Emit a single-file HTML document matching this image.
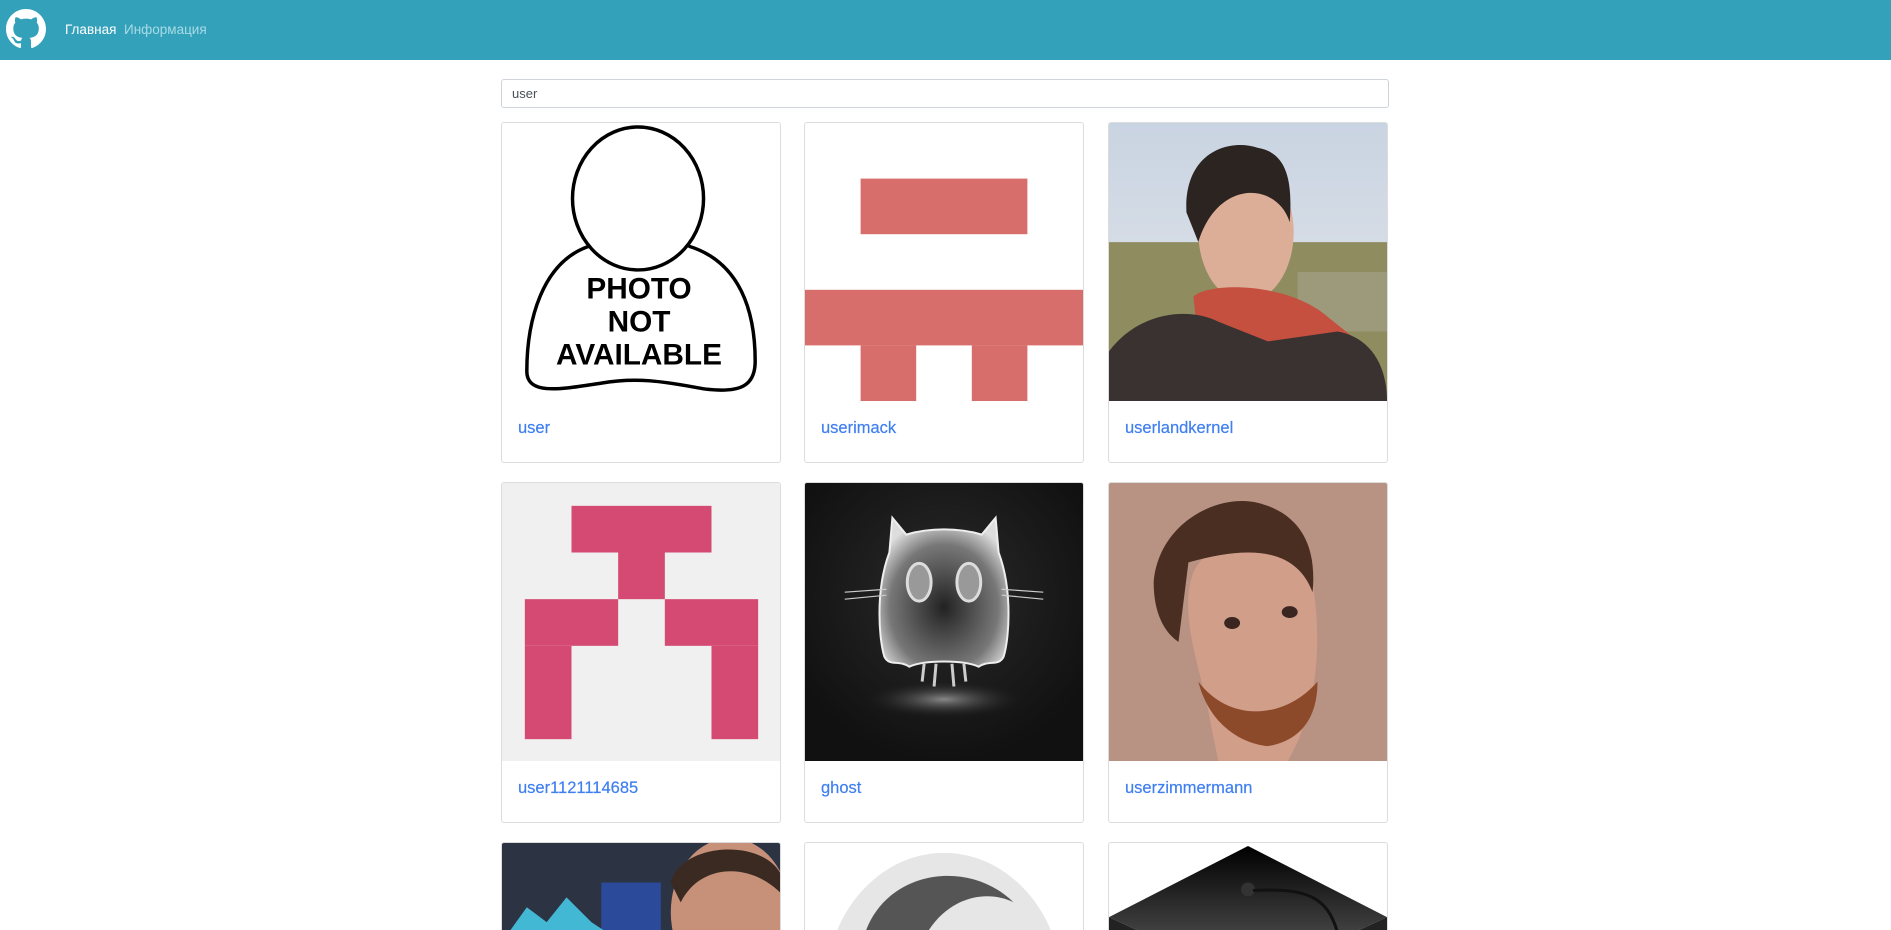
<!DOCTYPE html>
<html><head><meta charset="utf-8">
<style>
*{box-sizing:border-box;margin:0;padding:0}
html,body{width:1891px;height:930px;overflow:hidden;background:#fff;font-family:"Liberation Sans","DejaVu Sans",sans-serif}
.nav{position:absolute;left:0;top:0;width:1891px;height:60px;background:#33a1ba}
.nav a{position:absolute;top:22px;font-size:13.5px;text-decoration:none}
.search{position:absolute;left:501px;top:79px;width:888px;height:29px;border:1px solid #ced4da;border-radius:3px;font-size:13px;color:#495057;padding:6px 0 0 10px}
.card{position:absolute;width:280px;height:341px;border:1px solid #dcdcdc;border-radius:3px;overflow:hidden;background:#fff}
.card.b{height:88px;border-bottom:none;border-radius:3px 3px 0 0}
.card svg{display:block;width:278px;height:278px}
.card.b svg{height:87px}
.card .n{position:absolute;left:16px;top:296px;font-size:16.5px;color:#3f7ff0;-webkit-text-stroke:0.2px #3f7ff0}
</style></head><body>
<div class="nav">
<svg style="position:absolute;left:6px;top:9px" width="40" height="40" viewBox="0 0 16 16"><path fill="#fff" d="M8 0C3.58 0 0 3.58 0 8c0 3.54 2.29 6.530 5.47 7.59.4.07.55-.17.55-.38 0-.19-.01-.82-.01-1.49-2.01.37-2.530-.49-2.69-.94-.09-.23-.48-.94-.82-1.13-.28-.15-.68-.52-.01-.53.63-.01 1.08.58 1.23.82.72 1.21 1.87.87 2.33.66.07-.52.28-.87.51-1.07-1.78-.2-3.64-.89-3.64-3.95 0-.87.31-1.59.82-2.15-.08-.2-.36-1.02.08-2.12 0 0 .67-.21 2.2.82.64-.18 1.32-.27 2-.27.68 0 1.36.09 2 .27 1.53-1.04 2.2-.82 2.2-.82.44 1.1.16 1.92.08 2.12.51.56.82 1.27.82 2.15 0 3.07-1.87 3.75-3.65 3.95.29.25.54.73.54 1.48 0 1.07-.01 1.93-.01 2.2 0 .21.15.46.55.38A8.013 8.013 0 0016 8c0-4.42-3.58-8-8-8z"/></svg>
<a style="left:65px;color:#fff">Главная</a>
<a style="left:124px;color:#a8dbe6">Информация</a>
</div>
<div class="search">user</div>

<div class="card" style="left:501px;top:122px">
<svg viewBox="0 0 280 280"><rect width="280" height="280" fill="#fff"/>
<path d="M88 124 C40 140 25 200 25 250 C25 275 60 268 100 262 C140 255 170 262 205 268 C240 272 255 265 255 240 C255 190 240 140 188 124" fill="none" stroke="#000" stroke-width="3.5"/>
<ellipse cx="137" cy="76" rx="66" ry="72" fill="#fff" stroke="#000" stroke-width="3.5"/>
<g font-family="Liberation Sans,sans-serif" font-weight="bold" font-size="30" text-anchor="middle"><text x="138" y="177">PHOTO</text><text x="138" y="210">NOT</text><text x="138" y="243">AVAILABLE</text></g>
</svg><div class="n">user</div></div>

<div class="card" style="left:804px;top:122px">
<svg viewBox="0 0 280 280"><rect width="280" height="280" fill="#fff"/><g fill="#d86e6b"><rect x="56" y="56" width="168" height="56"/><rect x="0" y="168" width="280" height="56"/><rect x="56" y="224" width="56" height="56"/><rect x="168" y="224" width="56" height="56"/></g></svg>
<div class="n">userimack</div></div>

<div class="card" style="left:1108px;top:122px">
<svg viewBox="0 0 280 280"><defs><linearGradient id="sk" x1="0" y1="0" x2="0" y2="1"><stop offset="0" stop-color="#c9d4e2"/><stop offset="1" stop-color="#e4e6ea"/></linearGradient></defs>
<rect width="280" height="280" fill="url(#sk)"/><rect y="120" width="280" height="160" fill="#8f8c5f"/><rect x="190" y="150" width="90" height="60" fill="#9c9a7a"/>
<ellipse cx="138" cy="110" rx="48" ry="70" fill="#dcae98"/><path d="M78 90 C75 30 120 15 150 25 C180 30 185 60 182 100 C170 60 110 55 90 120Z" fill="#2c2420"/>
<path d="M85 175 C100 160 180 160 220 195 L245 215 L200 225 L90 220Z" fill="#c5503f"/>
<path d="M0 230 C30 190 80 185 110 200 L160 220 L230 210 C260 215 280 240 280 280 L0 280Z" fill="#3a3230"/></svg>
<div class="n">userlandkernel</div></div>

<div class="card" style="left:501px;top:482px">
<svg viewBox="0 0 280 280"><rect width="280" height="280" fill="#f0f0f0"/><g fill="#d44a72"><rect x="70" y="23" width="141" height="47"/><rect x="117" y="70" width="47" height="47"/><rect x="23" y="117" width="94" height="47"/><rect x="164" y="117" width="94" height="47"/><rect x="23" y="164" width="47" height="94"/><rect x="211" y="164" width="47" height="94"/></g></svg>
<div class="n">user1121114685</div></div>

<div class="card" style="left:804px;top:482px">
<svg viewBox="0 0 280 280"><defs><radialGradient id="gh" cx=".5" cy=".4" r=".6"><stop offset="0" stop-color="#2a2a2a"/><stop offset="1" stop-color="#111"/></radialGradient><radialGradient id="sh"><stop offset="0" stop-color="#888"/><stop offset="1" stop-color="#111" stop-opacity="0"/></radialGradient><radialGradient id="bd" cx=".5" cy=".6" r=".6"><stop offset="0" stop-color="#222"/><stop offset=".7" stop-color="#777"/><stop offset="1" stop-color="#ddd"/></radialGradient></defs>
<rect width="280" height="280" fill="url(#gh)"/><ellipse cx="140" cy="218" rx="85" ry="20" fill="url(#sh)"/>
<path d="M88 35 L102 52 C125 45 155 45 178 52 L192 35 L195 70 C210 110 205 160 200 175 C195 185 185 178 175 185 C160 178 120 178 105 185 C95 178 85 185 80 175 C75 160 70 110 85 70Z" fill="url(#bd)" stroke="#eee" stroke-width="2"/>
<path d="M120 182 L118 200 M132 182 L130 205 M148 182 L150 205 M160 182 L162 200" stroke="#ccc" stroke-width="3"/>
<ellipse cx="115" cy="100" rx="12" ry="19" fill="#999" stroke="#ddd" stroke-width="3"/><ellipse cx="165" cy="100" rx="12" ry="19" fill="#999" stroke="#ddd" stroke-width="3"/>
<g stroke="#ccc" stroke-width="1.2"><path d="M40 110 L82 107 M40 117 L82 113 M198 107 L240 110 M198 113 L240 117"/></g></svg>
<div class="n">ghost</div></div>

<div class="card" style="left:1108px;top:482px">
<svg viewBox="0 0 280 280"><rect width="280" height="280" fill="#b89282"/>
<path d="M100 230 C90 180 70 130 85 90 C110 40 180 40 205 100 C215 160 210 230 180 280 L110 280Z" fill="#d19e8a"/>
<path d="M45 100 C50 40 110 10 150 20 C190 30 210 60 205 110 C190 70 150 60 80 80 L70 160 C55 150 45 130 45 100Z" fill="#4a2e22"/>
<path d="M90 200 C120 240 175 240 210 200 C210 240 190 260 160 265 C130 262 100 240 90 200Z" fill="#8d4a2a"/>
<ellipse cx="124" cy="141" rx="8" ry="6" fill="#3a2520"/><ellipse cx="182" cy="130" rx="8" ry="6" fill="#3a2520"/></svg>
<div class="n">userzimmermann</div></div>

<div class="card b" style="left:501px;top:842px">
<svg viewBox="0 0 280 88" preserveAspectRatio="none"><rect width="280" height="88" fill="#2c3444"/><rect x="100" y="40" width="60" height="60" fill="#2b4b9a"/><path d="M0 100 L25 65 L45 80 L65 55 L90 80 L120 100Z" fill="#43b8d4"/><ellipse cx="230" cy="70" rx="60" ry="75" fill="#c69079"/><path d="M170 40 C180 0 260 -5 280 30 L280 50 C250 20 200 20 180 60Z" fill="#3a2a22"/></svg></div>

<div class="card b" style="left:804px;top:842px">
<svg viewBox="0 0 280 88" preserveAspectRatio="none"><rect width="280" height="88" fill="#fff"/><ellipse cx="140" cy="150" rx="120" ry="140" fill="#e6e6e6"/><path d="M55 120 C60 30 160 10 210 60 C180 45 130 55 110 120Z" fill="#555"/></svg></div>

<div class="card b" style="left:1108px;top:842px">
<svg viewBox="0 0 280 88" preserveAspectRatio="none"><rect width="280" height="88" fill="#fff"/><defs><linearGradient id="cp" x1="0" y1="0" x2="0" y2="1"><stop offset="0" stop-color="#000"/><stop offset="1" stop-color="#666"/></linearGradient></defs><path d="M140 3 L280 75 L140 140 L0 75Z" fill="url(#cp)"/><path d="M0 75 L140 140 L280 75 L280 90 L140 155 L0 90Z" fill="#222"/><circle cx="140" cy="47" r="7" fill="#333"/><path d="M145 48 C200 45 220 55 230 90" stroke="#111" stroke-width="3" fill="none"/></svg></div>
</body></html>
